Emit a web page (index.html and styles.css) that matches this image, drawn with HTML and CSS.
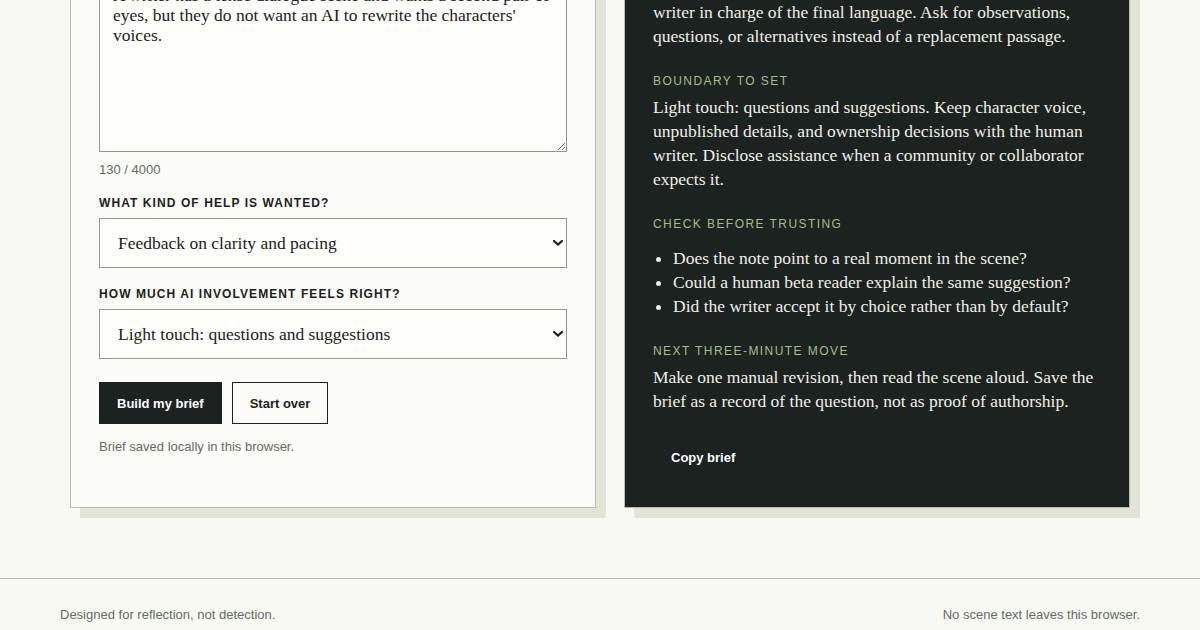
FILE: index.html
```html
<!DOCTYPE html>
<html lang="en">
<head>
<meta charset="utf-8">
<title>Second Pair of Eyes — Writing Brief</title>
<link rel="stylesheet" href="styles.css">
</head>
<body>
<main class="page">
  <section class="card card-form">
    <h2 class="card-title">Describe the situation</h2>
    <div class="field-scene">
      <label class="field-label" for="scene">What is happening in the scene?</label>
      <textarea id="scene" class="scene-input">A writer has a tense dialogue scene and wants a second pair of eyes, but they do not want an AI to rewrite the characters' voices.</textarea>
      <p class="counter">130 / 4000</p>
    </div>
    <div class="field">
      <label class="field-label" for="help">What kind of help is wanted?</label>
      <div class="select-wrap">
        <select id="help" class="select">
          <option>Feedback on clarity and pacing</option>
        </select>
        <svg class="chevron" width="10" height="6" viewBox="0 0 10 6" aria-hidden="true"><path d="M1 1 L5 4.6 L9 1" fill="none" stroke="#1b2220" stroke-width="2.2" stroke-linecap="square"/></svg>
      </div>
    </div>
    <div class="field">
      <label class="field-label" for="level">How much AI involvement feels right?</label>
      <div class="select-wrap">
        <select id="level" class="select">
          <option>Light touch: questions and suggestions</option>
        </select>
        <svg class="chevron" width="10" height="6" viewBox="0 0 10 6" aria-hidden="true"><path d="M1 1 L5 4.6 L9 1" fill="none" stroke="#1b2220" stroke-width="2.2" stroke-linecap="square"/></svg>
      </div>
    </div>
    <div class="actions">
      <button class="btn btn-primary" type="button">Build my brief</button>
      <button class="btn btn-secondary" type="button">Start over</button>
    </div>
    <p class="status">Brief saved locally in this browser.</p>
  </section>

  <section class="card card-brief">
    <h2 class="card-title">Your writing brief</h2>
    <div class="brief-section">
      <h3 class="brief-label">What to ask for</h3>
      <p class="brief-text">Ask for feedback on clarity and pacing, keeping the human<br>writer in charge of the final language. Ask for observations, questions, or alternatives instead of a replacement passage.</p>
    </div>
    <div class="brief-section">
      <h3 class="brief-label">Boundary to set</h3>
      <p class="brief-text">Light touch: questions and suggestions. Keep character voice, unpublished details, and ownership decisions with the human writer. Disclose assistance when a community or collaborator expects it.</p>
    </div>
    <div class="brief-section">
      <h3 class="brief-label">Check before trusting</h3>
      <ul class="brief-list">
        <li>Does the note point to a real moment in the scene?</li>
        <li>Could a human beta reader explain the same suggestion?</li>
        <li>Did the writer accept it by choice rather than by default?</li>
      </ul>
    </div>
    <div class="brief-section">
      <h3 class="brief-label">Next three-minute move</h3>
      <p class="brief-text">Make one manual revision, then read the scene aloud. Save the brief as a record of the question, not as proof of authorship.</p>
    </div>
    <button class="btn btn-copy" type="button">Copy brief</button>
  </section>
</main>
<footer class="site-footer">
  <span>Designed for reflection, not detection.</span>
  <span>No scene text leaves this browser.</span>
</footer>
</body>
</html>
```

FILE: styles.css
```css
* {
  box-sizing: border-box;
}

body {
  margin: 0;
  background: #f9f9f4;
  color: #1b2220;
  font-family: "Liberation Sans", Arial, sans-serif;
}

.page {
  margin-top: -129px;
  padding: 0 70px 70px 70px;
  display: grid;
  grid-template-columns: 526px 506px;
  column-gap: 28px;
  align-items: stretch;
}

.card {
  border: 1px solid #b8bcb1;
  padding: 28px;
  box-shadow: 10px 10px 0 #e3e4d7;
}

.card-form {
  background: #fbfbf7;
}

.card-brief {
  background: #1b2220;
  color: #f1efe6;
  padding-bottom: 29px;
}

.card-title {
  margin: 0 0 17px;
  font-family: "Liberation Serif", "Times New Roman", serif;
  font-size: 26px;
  line-height: 30px;
  font-weight: 400;
}

.card-brief .card-title {
  margin-bottom: 25px;
}

.field-label {
  display: block;
  margin: 0 0 7px;
  font-size: 12px;
  line-height: 16px;
  font-weight: 700;
  letter-spacing: 0.09em;
  text-transform: uppercase;
  color: #1b2220;
}

.scene-input {
  display: block;
  width: 100%;
  height: 182px;
  margin: 0;
  padding: 14px 13px;
  border: 1px solid #8f978e;
  border-radius: 0;
  background: #fefefb;
  color: #1b2220;
  font-family: "Liberation Serif", "Times New Roman", serif;
  font-size: 17.5px;
  line-height: 20px;
  resize: vertical;
}

.counter {
  margin: 11px 0 0;
  font-size: 13px;
  line-height: 14px;
  color: #636b64;
}

.field {
  margin-top: 18px;
}

.select-wrap {
  position: relative;
}

.select {
  display: block;
  width: 100%;
  height: 50px;
  margin: 0;
  padding: 0 40px 0 18px;
  border: 1px solid #8f978e;
  border-radius: 0;
  background: #fefefb;
  color: #1b2220;
  font-family: "Liberation Serif", "Times New Roman", serif;
  font-size: 17.5px;
  -webkit-appearance: none;
  appearance: none;
}

.chevron {
  position: absolute;
  right: 4px;
  top: 22px;
  pointer-events: none;
}

.actions {
  display: flex;
  gap: 10px;
  margin-top: 23px;
}

.btn {
  height: 42px;
  margin: 0;
  padding: 0 17px;
  border: 1px solid #1b2220;
  border-radius: 0;
  font-family: "Liberation Sans", Arial, sans-serif;
  font-size: 13px;
  font-weight: 700;
  cursor: pointer;
}

.btn-primary {
  background: #1b2220;
  color: #ffffff;
}

.btn-secondary {
  background: transparent;
  color: #1b2220;
}

.status {
  margin: 14px 0 0;
  font-size: 13px;
  line-height: 18px;
  color: #636b64;
}

.brief-section + .brief-section {
  margin-top: 26px;
}

.brief-label {
  margin: 0 0 6px;
  font-size: 12px;
  line-height: 15px;
  font-weight: 400;
  letter-spacing: 0.12em;
  text-transform: uppercase;
  color: #a8bb8f;
}

.brief-text {
  margin: 0;
  font-family: "Liberation Serif", "Times New Roman", serif;
  font-size: 17.5px;
  line-height: 24px;
}

.brief-list {
  margin: 14px 0 0;
  padding-left: 20px;
  font-family: "Liberation Serif", "Times New Roman", serif;
  font-size: 17.5px;
  line-height: 24px;
}

.btn-copy {
  margin-top: 23px;
  background: #1b2220;
  color: #ffffff;
  border-color: #1b2220;
}

.site-footer {
  display: flex;
  justify-content: space-between;
  padding: 27px 60px 26px;
  border-top: 1px solid #b5bab0;
  font-size: 13px;
  line-height: 18px;
  color: #636b64;
}
```
